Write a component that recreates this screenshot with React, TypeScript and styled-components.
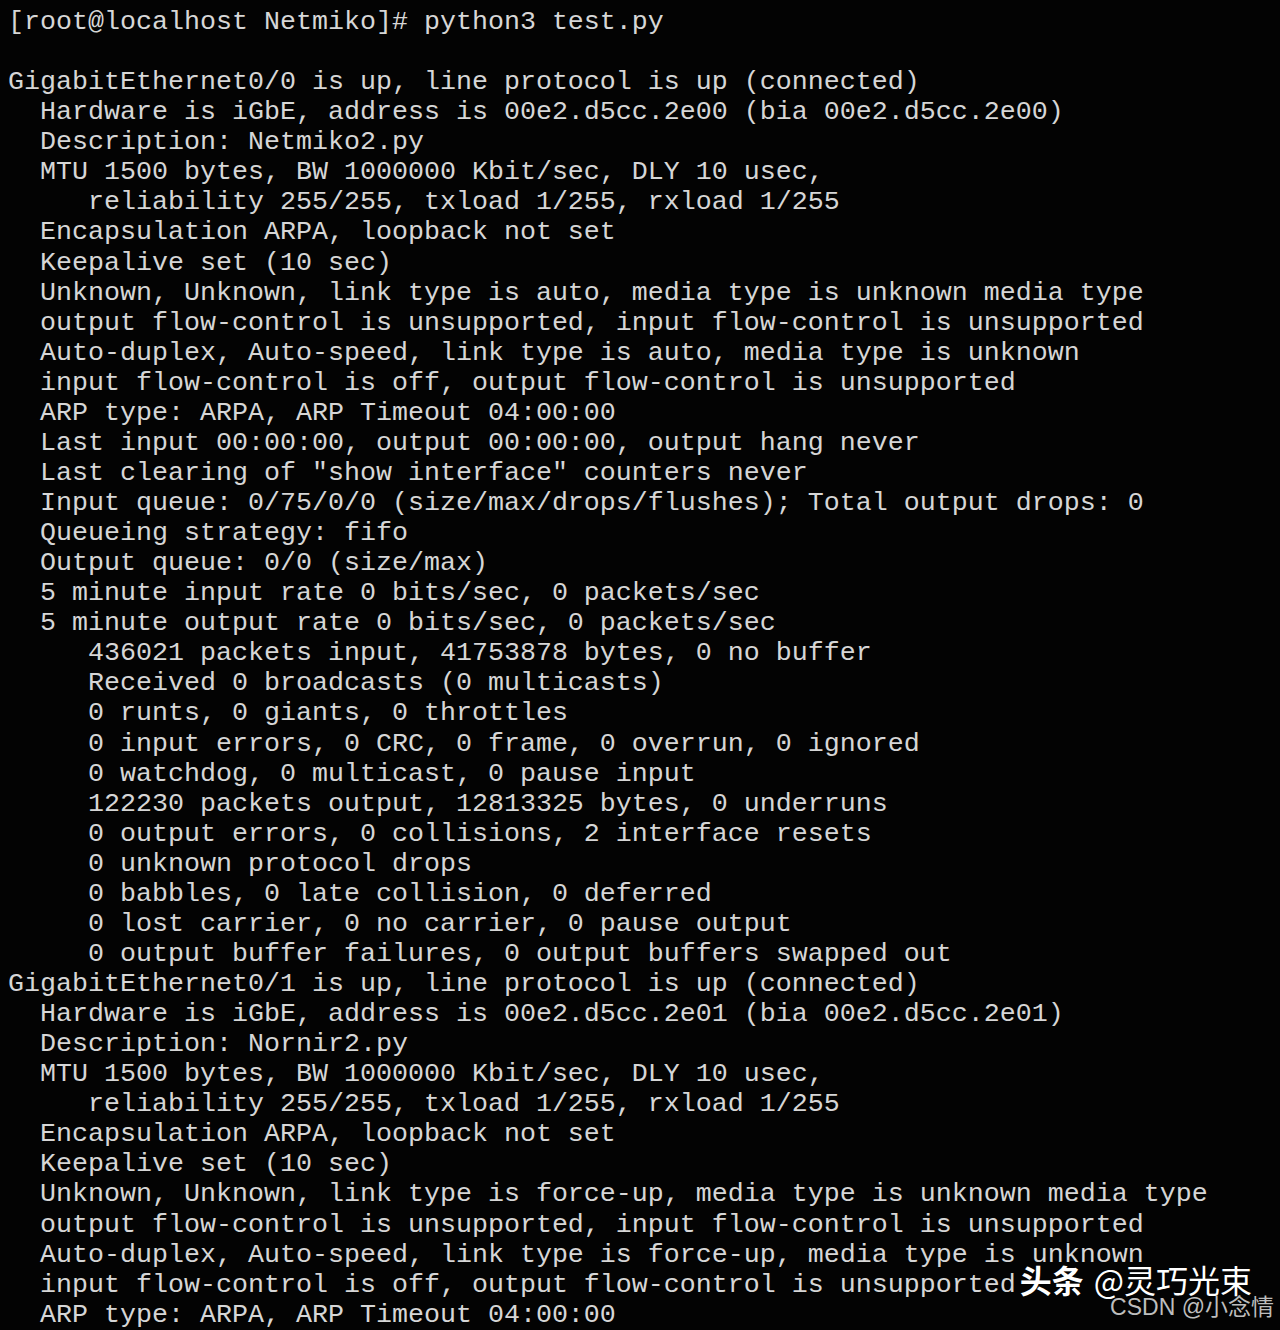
import React from "react";
import styled, { createGlobalStyle } from "styled-components";

const Global = createGlobalStyle`
  html, body { margin: 0; padding: 0; background: #030303; }
  body { width: 1280px; height: 1330px; overflow: hidden; }
`;

const Screen = styled.div`
  position: relative;
  width: 1280px;
  height: 1330px;
  background: #030303;
  overflow: hidden;
`;

const Terminal = styled.pre`
  margin: 0;
  padding: 7px 0 0 8px;
  font-family: "Liberation Mono", "DejaVu Sans Mono", monospace;
  font-size: 26.667px;
  line-height: 30.07px;
  color: #d6d6d6;
  white-space: pre;
`;

const Watermark = styled.div`
  position: absolute;
  right: 28px;
  top: 1263px;
  display: flex;
  align-items: baseline;
  gap: 10px;
  font-family: "Noto Sans CJK SC", "Noto Sans", sans-serif;
  color: #ffffff;
  font-size: 32px;
  line-height: 1;
`;

const Brand = styled.span`
  font-weight: 700;
`;

const Handle = styled.span`
  font-weight: 400;
`;

const Credit = styled.div`
  position: absolute;
  right: 6px;
  top: 1296px;
  font-family: "Liberation Sans", "Noto Sans CJK SC", sans-serif;
  font-size: 23px;
  line-height: 1;
  color: #bdbdbd;
`;

const lines = [
  "[root@localhost Netmiko]# python3 test.py",
  "",
  "GigabitEthernet0/0 is up, line protocol is up (connected)",
  "  Hardware is iGbE, address is 00e2.d5cc.2e00 (bia 00e2.d5cc.2e00)",
  "  Description: Netmiko2.py",
  "  MTU 1500 bytes, BW 1000000 Kbit/sec, DLY 10 usec,",
  "     reliability 255/255, txload 1/255, rxload 1/255",
  "  Encapsulation ARPA, loopback not set",
  "  Keepalive set (10 sec)",
  "  Unknown, Unknown, link type is auto, media type is unknown media type",
  "  output flow-control is unsupported, input flow-control is unsupported",
  "  Auto-duplex, Auto-speed, link type is auto, media type is unknown",
  "  input flow-control is off, output flow-control is unsupported",
  "  ARP type: ARPA, ARP Timeout 04:00:00",
  "  Last input 00:00:00, output 00:00:00, output hang never",
  "  Last clearing of \"show interface\" counters never",
  "  Input queue: 0/75/0/0 (size/max/drops/flushes); Total output drops: 0",
  "  Queueing strategy: fifo",
  "  Output queue: 0/0 (size/max)",
  "  5 minute input rate 0 bits/sec, 0 packets/sec",
  "  5 minute output rate 0 bits/sec, 0 packets/sec",
  "     436021 packets input, 41753878 bytes, 0 no buffer",
  "     Received 0 broadcasts (0 multicasts)",
  "     0 runts, 0 giants, 0 throttles",
  "     0 input errors, 0 CRC, 0 frame, 0 overrun, 0 ignored",
  "     0 watchdog, 0 multicast, 0 pause input",
  "     122230 packets output, 12813325 bytes, 0 underruns",
  "     0 output errors, 0 collisions, 2 interface resets",
  "     0 unknown protocol drops",
  "     0 babbles, 0 late collision, 0 deferred",
  "     0 lost carrier, 0 no carrier, 0 pause output",
  "     0 output buffer failures, 0 output buffers swapped out",
  "GigabitEthernet0/1 is up, line protocol is up (connected)",
  "  Hardware is iGbE, address is 00e2.d5cc.2e01 (bia 00e2.d5cc.2e01)",
  "  Description: Nornir2.py",
  "  MTU 1500 bytes, BW 1000000 Kbit/sec, DLY 10 usec,",
  "     reliability 255/255, txload 1/255, rxload 1/255",
  "  Encapsulation ARPA, loopback not set",
  "  Keepalive set (10 sec)",
  "  Unknown, Unknown, link type is force-up, media type is unknown media type",
  "  output flow-control is unsupported, input flow-control is unsupported",
  "  Auto-duplex, Auto-speed, link type is force-up, media type is unknown",
  "  input flow-control is off, output flow-control is unsupported",
  "  ARP type: ARPA, ARP Timeout 04:00:00",
];

export default function App() {
  return (
    <Screen>
      <Global />
      <Terminal>{lines.join("\n")}</Terminal>
      <Watermark>
        <Brand>头条</Brand>
        <Handle>@灵巧光束</Handle>
      </Watermark>
      <Credit>CSDN @小念情</Credit>
    </Screen>
  );
}
